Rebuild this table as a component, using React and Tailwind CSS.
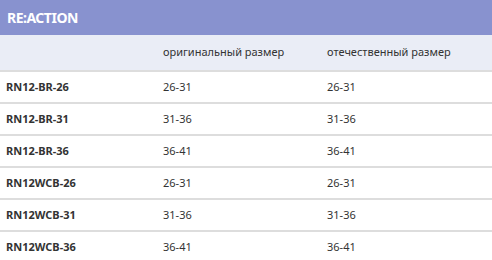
const rows = [
  ["RN12-BR-26", "26-31", "26-31"],
  ["RN12-BR-31", "31-36", "31-36"],
  ["RN12-BR-36", "36-41", "36-41"],
  ["RN12WCB-26", "26-31", "26-31"],
  ["RN12WCB-31", "31-36", "31-36"],
  ["RN12WCB-36", "36-41", "36-41"],
]

export default function App() {
  return (
    <div className="w-[492px] h-[260px] overflow-hidden bg-white text-[#333333] text-[11px] font-['Noto_Sans',sans-serif]">
      <div className="h-[35px] bg-[#8892cf] flex items-center px-[7px] text-white text-[14px] tracking-[-0.5px] font-bold">
        RE:ACTION
      </div>
      <div className="h-[37px] bg-[#eaedf6] border-b-2 border-[#dddddd] grid grid-cols-[157px_164px_1fr] items-center pl-[6px]">
        <div></div>
        <div>оригинальный размер</div>
        <div>отечественный размер</div>
      </div>
      {rows.map((r) => (
        <div key={r[0]} className="h-[32px] border-b-2 border-[#dddddd] grid grid-cols-[157px_164px_1fr] items-center pl-[6px]">
          <div className="font-bold">{r[0]}</div>
          <div>{r[1]}</div>
          <div>{r[2]}</div>
        </div>
      ))}
    </div>
  )
}
